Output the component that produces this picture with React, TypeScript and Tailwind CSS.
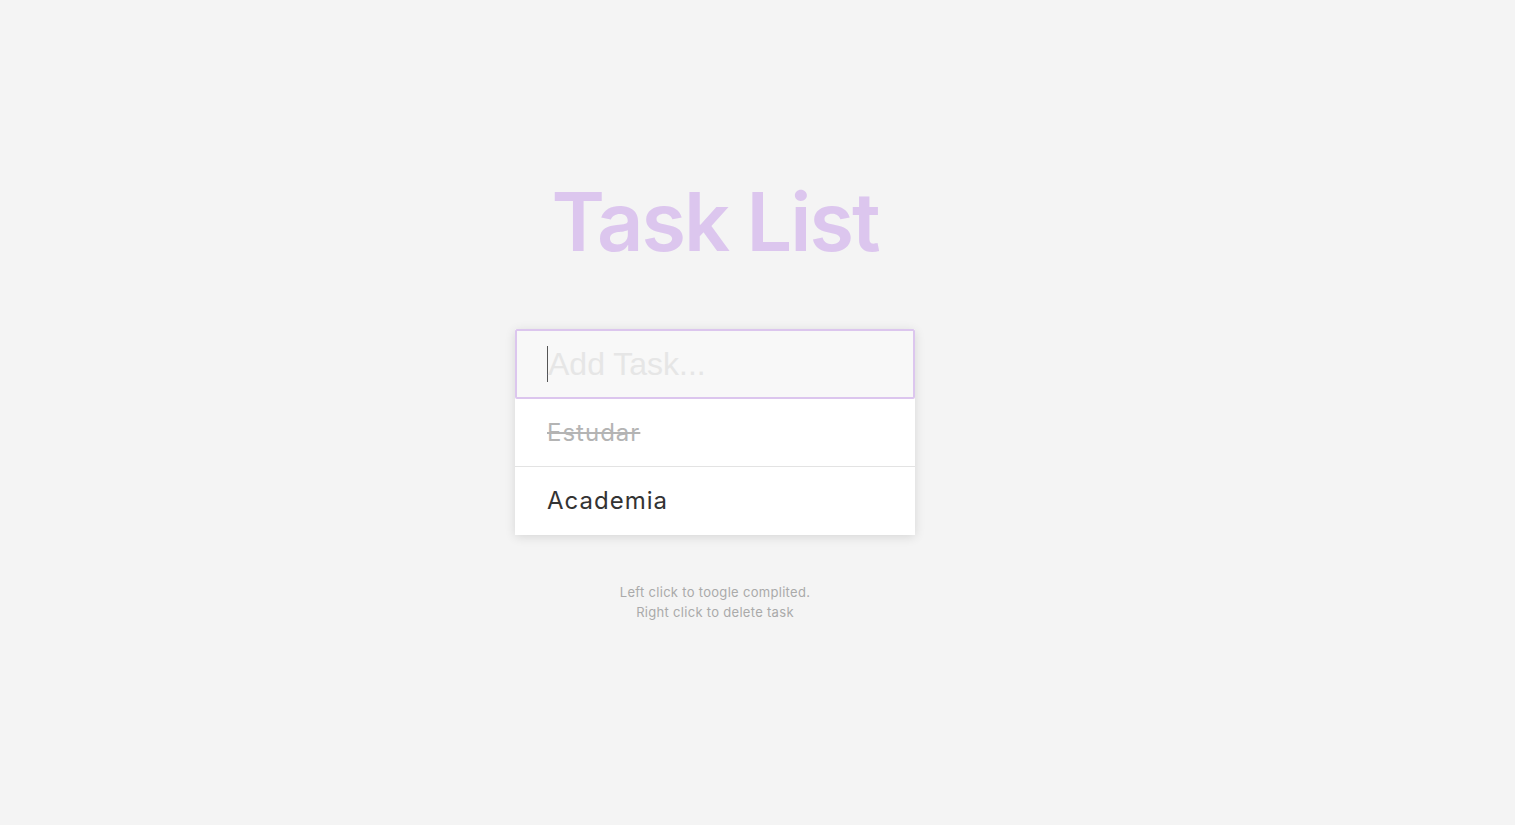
// Lista de tareas: título, input y lista con ayuda abajo.

const TASKS = [
  { id: 1, text: 'Estudar',  done: true  },
  { id: 2, text: 'Academia', done: false },
]

export default function App() {
  return (
    <div
      className="min-h-screen w-full bg-[#f4f4f4] flex flex-col items-center pr-[85px]"
      style={{ fontFamily: 'Inter, "Noto Sans", sans-serif' }}
    >
      <h1 className="mt-[168px] text-[81px] leading-[108px] font-semibold tracking-[-2px] text-[#dcc6ee]">
        Task List
      </h1>

      <div className="mt-[53px] w-[400px] bg-white shadow-[0_2px_10px_rgba(0,0,0,0.12)]">
        <div className="h-[70px] border-2 border-[#dcc6ee] rounded-[2px] bg-[#f8f8f8] flex items-center pl-[30px]">
          <span className="w-px h-[36px] bg-[#555]" />
          <span
            className="text-[32px] text-[#e6e6e6]"
            style={{ fontFamily: '"Liberation Sans", Arial, sans-serif' }}
          >
            Add Task...
          </span>
        </div>

        {TASKS.map((task, i) => (
          <div
            key={task.id}
            className={
              'h-[68px] flex items-center px-8 text-[24px] tracking-[1px] ' +
              (i < TASKS.length - 1 ? 'border-b border-[#e3e3e3] ' : '') +
              (task.done ? 'line-through text-[#b4b4b4]' : 'text-[#333]')
            }
          >
            {task.text}
          </div>
        ))}
      </div>

      <div className="mt-[47px] text-center text-[13px] leading-[20px] tracking-[0.3px] text-[#aaa]">
        <p>Left click to toogle complited.</p>
        <p>Right click to delete task</p>
      </div>
    </div>
  )
}
